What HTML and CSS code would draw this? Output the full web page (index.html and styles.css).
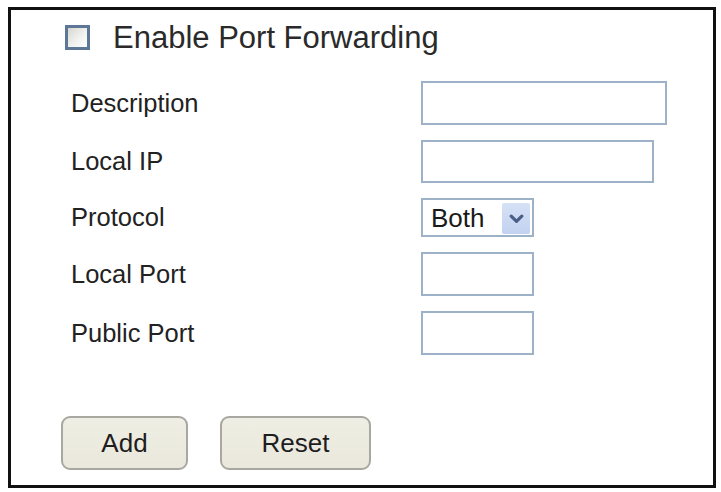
FILE: index.html
```html
<!DOCTYPE html>
<html>
<head>
<meta charset="utf-8">
<link rel="stylesheet" href="styles.css">
</head>
<body>
<div class="frame">
  <label class="header">
    <span class="checkbox"></span>
    <span class="header-text">Enable Port Forwarding</span>
  </label>
  <div class="form">
    <div class="label">Description</div>
    <div class="field"><input class="input w-desc" type="text"></div>
    <div class="label">Local IP</div>
    <div class="field"><input class="input w-ip" type="text"></div>
    <div class="label">Protocol</div>
    <div class="field">
      <div class="select-wrap">
        <select class="select"><option>Both</option></select>
        <span class="select-btn">
          <svg width="15" height="10" viewBox="0 0 15 10"><path d="M2.2 2.2 L7.5 7.4 L12.8 2.2" fill="none" stroke="#4a5e88" stroke-width="3.2" stroke-linecap="round" stroke-linejoin="round"/></svg>
        </span>
      </div>
    </div>
    <div class="label">Local Port</div>
    <div class="field"><input class="input w-port" type="text"></div>
    <div class="label">Public Port</div>
    <div class="field"><input class="input w-port" type="text"></div>
  </div>
  <div class="buttons">
    <button class="btn btn-add">Add</button>
    <button class="btn btn-reset">Reset</button>
  </div>
</div>
</body>
</html>
```
FILE: styles.css
```css
html, body {
  margin: 0;
  padding: 0;
  background: #ffffff;
}
body {
  font-family: "Liberation Sans", Arial, sans-serif;
  color: #222222;
}
.frame {
  margin: 7px 0 0 8px;
  width: 708px;
  height: 481px;
  box-sizing: border-box;
  border: 3px solid #111111;
  padding-top: 10px;
}
.header {
  display: flex;
  align-items: flex-start;
  margin-left: 54px;
}
.checkbox {
  width: 25px;
  height: 25px;
  box-sizing: border-box;
  border: 3px solid #5d7797;
  background: linear-gradient(135deg, #d6d6d2 0%, #f1f1ef 55%, #ffffff 100%);
  margin-top: 5px;
  flex: none;
}
.header-text {
  margin-left: 23px;
  font-size: 31px;
  line-height: 36px;
  color: #2a2a2a;
}
.form {
  display: grid;
  grid-template-columns: 350px auto;
  row-gap: 15px;
  margin-top: 25px;
  padding-left: 60px;
}
.label {
  display: flex;
  align-items: center;
  font-size: 25.5px;
  color: #222222;
}
.field {
  display: flex;
  align-items: center;
}
.input {
  box-sizing: border-box;
  height: 44px;
  border: 2px solid #9db1c8;
  background: #ffffff;
  margin: 0;
  padding: 0;
}
.w-desc { width: 246px; }
.w-ip { width: 233px; height: 43px; }
.w-port { width: 113px; }
.select-wrap {
  position: relative;
  width: 113px;
  height: 39px;
}
.select {
  -webkit-appearance: none;
  appearance: none;
  width: 100%;
  height: 100%;
  box-sizing: border-box;
  border: 2px solid #9db1c8;
  border-radius: 0;
  background: #ffffff;
  font-family: "Liberation Sans", Arial, sans-serif;
  font-size: 26px;
  color: #1a1a1a;
  padding: 0 0 0 8px;
  margin: 0;
}
.select-btn {
  position: absolute;
  right: 4px;
  top: 5px;
  bottom: 3px;
  width: 28px;
  border-radius: 2px;
  background: linear-gradient(180deg, #d6e1f6 0%, #c2d2f0 100%);
  display: flex;
  align-items: center;
  justify-content: center;
  pointer-events: none;
}
.buttons {
  display: flex;
  gap: 32px;
  margin-top: 61px;
  padding-left: 50px;
}
.btn {
  height: 54px;
  box-sizing: border-box;
  border: 2px solid #a9a8a0;
  border-radius: 9px;
  background: linear-gradient(180deg, #efeee4 0%, #eae8dc 100%);
  font-family: "Liberation Sans", Arial, sans-serif;
  font-size: 26px;
  color: #1e1e1e;
  padding: 0;
  margin: 0;
}
.btn-add { width: 127px; }
.btn-reset { width: 151px; }
```
